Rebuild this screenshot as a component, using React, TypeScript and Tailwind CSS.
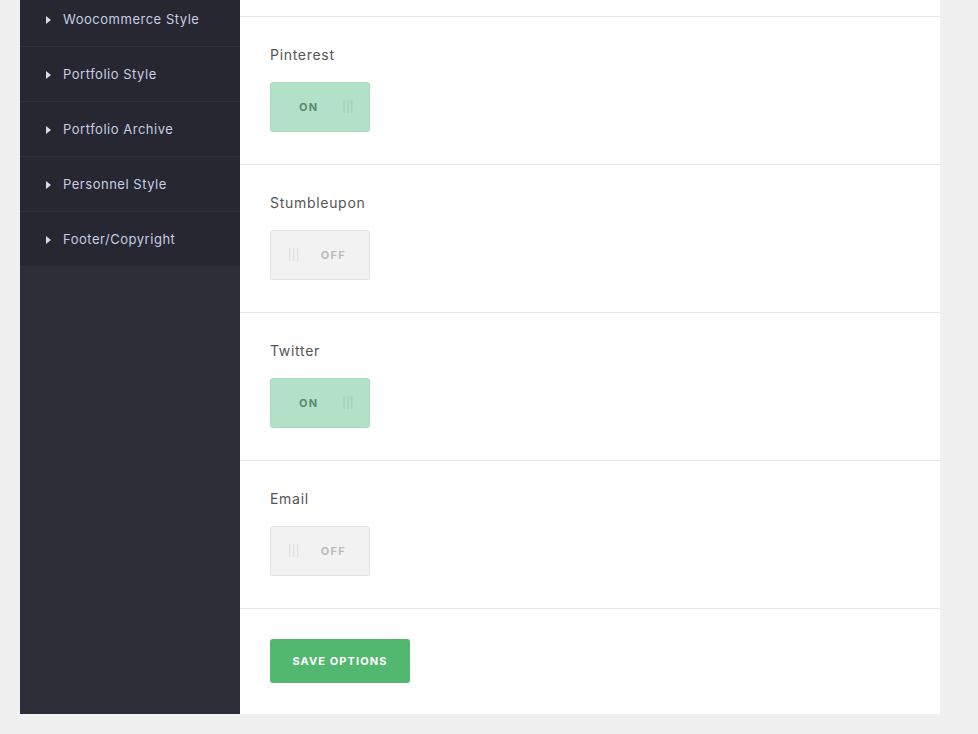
import React from "react";

const menu = ["Woocommerce Style", "Portfolio Style", "Portfolio Archive", "Personnel Style", "Footer/Copyright"];
const opts: { label: string; on: boolean }[] = [
  { label: "Pinterest", on: true },
  { label: "Stumbleupon", on: false },
  { label: "Twitter", on: true },
  { label: "Email", on: false },
];

function Toggle({ on }: { on: boolean }) {
  if (on) {
    return (
      <div className="w-[100px] h-[50px] rounded-[3px] border border-[#a9d9bf] bg-[#b3e1c8] flex items-center text-[11px] font-bold tracking-[0.12em] text-[#5b8b6d]">
        <span className="ml-[28px]">ON</span>
        <span className="ml-auto mr-[15px] font-light tracking-[0.5px] text-[#93c4a8]">|||</span>
      </div>
    );
  }
  return (
    <div className="w-[100px] h-[50px] rounded-[3px] border border-[#e3e3e3] bg-[#f2f2f2] flex items-center text-[11px] font-bold tracking-[0.12em] text-[#bcbcbc]">
      <span className="ml-[17px] font-light tracking-[0.5px] text-[#d3d3d3]">|||</span>
      <span className="ml-auto mr-[23px]">OFF</span>
    </div>
  );
}

export default function App() {
  return (
    <div className="w-[978px] h-[734px] overflow-hidden bg-[#f0f0f0] pl-[20px]" style={{ fontFamily: "Inter, 'Noto Sans', sans-serif" }}>
      <div className="flex w-[920px] h-[714px]">
        <div className="w-[220px] bg-[#2d2e38] flex flex-col">
          <div className="-mt-[8px]">
            {menu.map((m) => (
              <div key={m} className="h-[55px] bg-[#262730] border-b border-[#2f303b] flex items-center pt-px pl-[26px] text-[13px] tracking-[0.04em] text-[#c9cde3]">
                <svg width="5" height="8" viewBox="0 0 5 8" className="mr-[12px]"><path d="M0 0 L5 4 L0 8 Z" fill="#d8dbe9" /></svg>
                <span>{m}</span>
              </div>
            ))}
          </div>
        </div>
        <div className="w-[700px] bg-white flex flex-col">
          <div className="h-[17px] border-b border-[#e8e8e8]" />
          {opts.map((o) => (
            <div key={o.label} className="h-[148px] border-b border-[#e8e8e8] pl-[30px] pt-[28px]">
              <div className="text-[14px] tracking-[0.05em] text-[#555555] leading-[20px]">{o.label}</div>
              <div className="mt-[17px]"><Toggle on={o.on} /></div>
            </div>
          ))}
          <div className="pl-[30px] pt-[30px]">
            <button className="w-[140px] h-[44px] rounded-[3px] bg-[#52b86f] text-white text-[11px] font-bold tracking-[0.1em]">SAVE OPTIONS</button>
          </div>
        </div>
      </div>
    </div>
  );
}
